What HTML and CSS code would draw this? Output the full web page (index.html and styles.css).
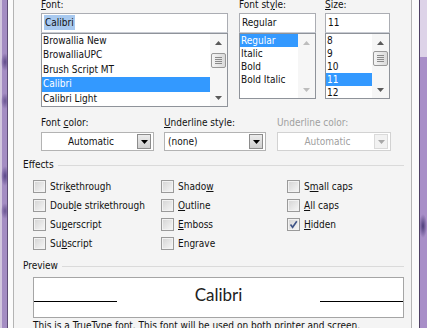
FILE: index.html
```html
<!DOCTYPE html>
<html lang="en">
<head>
    <meta charset="UTF-8">
    <meta name="viewport" content="width=device-width, initial-scale=1.0">
    <title>Font</title>
    <link rel="stylesheet" href="styles.css">
</head>
<body>
    <div class="window">
        <div class="frame frame-left"></div>
        <div class="client">
            <div class="dialog">

                <div class="pickers">
                    <div class="picker picker-font">
                        <div class="label"><u>F</u>ont:</div>
                        <div class="textbox"><span class="text-sel">Calibri</span></div>
                        <div class="listbox listbox-tall">
                            <ul class="items items-font">
                                <li>Browallia New</li>
                                <li>BrowalliaUPC</li>
                                <li>Brush Script MT</li>
                                <li class="selected">Calibri</li>
                                <li>Calibri Light</li>
                            </ul>
                            <div class="scrollbar">
                                <div class="sb-arrow"><svg width="7" height="4"><path d="M0 4L3.5 0L7 4z"/></svg></div>
                                <div class="sb-track"><div class="thumb thumb-font"><svg width="7" height="7"><path d="M0 0.5h7M0 2.5h7M0 4.5h7M0 6.5h7"/></svg></div></div>
                                <div class="sb-arrow"><svg width="7" height="4"><path d="M0 0L7 0L3.5 4z"/></svg></div>
                            </div>
                        </div>
                    </div>

                    <div class="picker picker-style">
                        <div class="label">Font st<u>y</u>le:</div>
                        <div class="textbox">Regular</div>
                        <div class="listbox">
                            <ul class="items">
                                <li class="selected">Regular</li>
                                <li>Italic</li>
                                <li>Bold</li>
                                <li>Bold Italic</li>
                            </ul>
                            <div class="scrollbar scrollbar-off">
                                <div class="sb-arrow"><svg width="7" height="4"><path d="M0 4L3.5 0L7 4z"/></svg></div>
                                <div class="sb-track"></div>
                                <div class="sb-arrow"><svg width="7" height="4"><path d="M0 0L7 0L3.5 4z"/></svg></div>
                            </div>
                        </div>
                    </div>

                    <div class="picker picker-size">
                        <div class="label"><u>S</u>ize:</div>
                        <div class="textbox">11</div>
                        <div class="listbox">
                            <ul class="items">
                                <li>8</li>
                                <li>9</li>
                                <li>10</li>
                                <li class="selected">11</li>
                                <li>12</li>
                            </ul>
                            <div class="scrollbar">
                                <div class="sb-arrow"><svg width="7" height="4"><path d="M0 4L3.5 0L7 4z"/></svg></div>
                                <div class="sb-track"><div class="thumb"><svg width="7" height="7"><path d="M0 0.5h7M0 2.5h7M0 4.5h7M0 6.5h7"/></svg></div></div>
                                <div class="sb-arrow"><svg width="7" height="4"><path d="M0 0L7 0L3.5 4z"/></svg></div>
                            </div>
                        </div>
                    </div>
                </div>

                <div class="combos">
                    <div class="combo-field combo-color">
                        <div class="label">Font <u>c</u>olor:</div>
                        <div class="combo">
                            <span class="combo-text centered">Automatic</span>
                            <span class="combo-btn"><svg width="7" height="4"><path d="M0 0L7 0L3.5 4z"/></svg></span>
                        </div>
                    </div>
                    <div class="combo-field combo-ustyle">
                        <div class="label"><u>U</u>nderline style:</div>
                        <div class="combo">
                            <span class="combo-text">(none)</span>
                            <span class="combo-btn"><svg width="7" height="4"><path d="M0 0L7 0L3.5 4z"/></svg></span>
                        </div>
                    </div>
                    <div class="combo-field combo-ucolor disabled">
                        <div class="label">Underline color:</div>
                        <div class="combo">
                            <span class="combo-text centered">Automatic</span>
                            <span class="combo-btn"><svg width="7" height="4"><path d="M0 0L7 0L3.5 4z"/></svg></span>
                        </div>
                    </div>
                </div>

                <div class="group-title group-effects">Effects</div>
                <div class="effects">
                    <div class="check-row"><span class="check"></span><span>Stri<u>k</u>ethrough</span></div>
                    <div class="check-row"><span class="check"></span><span>Doub<u>l</u>e strikethrough</span></div>
                    <div class="check-row"><span class="check"></span><span>Su<u>p</u>erscript</span></div>
                    <div class="check-row"><span class="check"></span><span>Su<u>b</u>script</span></div>
                    <div class="check-row"><span class="check"></span><span>Shado<u>w</u></span></div>
                    <div class="check-row"><span class="check"></span><span><u>O</u>utline</span></div>
                    <div class="check-row"><span class="check"></span><span><u>E</u>mboss</span></div>
                    <div class="check-row"><span class="check"></span><span>En<u>g</u>rave</span></div>
                    <div class="check-row"><span class="check"></span><span>S<u>m</u>all caps</span></div>
                    <div class="check-row"><span class="check"></span><span><u>A</u>ll caps</span></div>
                    <div class="check-row"><span class="check checked"><svg width="11" height="11"><path d="M2.5 5.5L4.6 8.3L8.8 2.2"/></svg></span><span><u>H</u>idden</span></div>
                </div>

                <div class="group-title group-preview">Preview</div>
                <div class="preview-box">
                    <div class="rule"></div>
                    <div class="sample">Calibri</div>
                    <div class="rule"></div>
                </div>
                <div class="note">This is a TrueType font. This font will be used on both printer and screen.</div>

            </div>
        </div>
        <div class="frame frame-right"></div>
    </div>
</body>
</html>
```

FILE: styles.css
```css
body {
    margin: 0;
    width: 427px;
    height: 328px;
    overflow: hidden;
    font-family: "DejaVu Sans Condensed", "DejaVu Sans", sans-serif;
    font-stretch: condensed;
    font-size: 10px;
    color: #111;
}
u {
    text-underline-offset: 1px;
}
.window {
    display: flex;
    height: 328px;
}
.frame {
    width: 7px;
    flex: none;
}
.frame-left {
    border-right: 1px solid #5e4d76;
    background:
        radial-gradient(ellipse 4px 9px at 5px 62px, #5f4a88, transparent),
        radial-gradient(ellipse 4px 8px at 5px 101px, #6a5592, transparent),
        radial-gradient(ellipse 4px 10px at 5px 176px, #594687, transparent),
        radial-gradient(ellipse 4px 8px at 5px 211px, #6a5592, transparent),
        linear-gradient(to right, #d2c7de 0 2px, #a48dc3 2px);
}
.frame-right {
    border-left: 1px solid #4f4064;
    background:
        radial-gradient(ellipse 4px 12px at 3px 226px, #4d3c7a, transparent),
        linear-gradient(to bottom, #ddd3e8 0 57px, #a88ec8 57px);
}
.client {
    flex: 1;
    display: flex;
    padding: 0 7px 0 5px;
    background: #fbfbfb;
}
.dialog {
    flex: 1;
    border-left: 1px solid #b4b4b4;
    border-right: 1px solid #b4b4b4;
    background: #f4f4f4;
    padding: 0 7px 0 9px;
}
.label {
    height: 13px;
    line-height: 13px;
    white-space: nowrap;
}

/* font / style / size pickers */
.pickers {
    display: flex;
    margin: -2px 0 0 18px;
}
.picker-font { width: 187px; }
.picker-style { width: 77px; margin-left: 11px; }
.picker-size { width: 65px; margin-left: 9px; }
.picker .label {
    margin-bottom: 2px;
}
.textbox {
    height: 18px;
    line-height: 18px;
    border: 1px solid #abadb3;
    border-bottom-color: #c9ccd3;
    background: #fff;
    padding-left: 2px;
}
.text-sel {
    background: #a8c9ef;
    padding: 2px 1px;
}
.listbox {
    display: flex;
    height: 64px;
    border: 1px solid #8f939a;
    background: #fff;
}
.listbox-tall {
    height: 72px;
}
.items {
    flex: 1;
    list-style: none;
    margin: 0;
    padding: 0 0 0 0;
    overflow: hidden;
}
.items li {
    height: 13px;
    line-height: 13px;
    padding-left: 1px;
    white-space: nowrap;
}
.items-font li {
    height: 14.4px;
    line-height: 14.4px;
}
.items li.selected {
    background: #3399ff;
    color: #fff;
}
.scrollbar {
    width: 17px;
    display: flex;
    flex-direction: column;
    background: #f6f6f6;
}
.sb-arrow {
    height: 17px;
    display: flex;
    align-items: center;
    justify-content: center;
    fill: #5a5a5a;
}
.scrollbar-off .sb-arrow {
    fill: #bdbdbd;
}
.sb-track {
    flex: 1;
}
.thumb {
    height: 13px;
    margin: 0 1px;
    border: 1px solid #989898;
    border-radius: 2px;
    background: linear-gradient(to right, #f4f4f4, #dadada);
    display: flex;
    align-items: center;
    justify-content: center;
    stroke: #8a8a8a;
    stroke-width: 1;
}
.thumb-font {
    margin-top: 2px;
}

/* colour and underline combos */
.combos {
    display: flex;
    margin: 9px 0 0 18px;
}
.combo-color { width: 113px; }
.combo-ustyle { width: 102px; margin-left: 10px; }
.combo-ucolor { width: 114px; margin-left: 11px; }
.combo-field .label {
    margin-bottom: 3px;
}
.combo {
    display: flex;
    align-items: center;
    height: 17px;
    border: 1px solid #b3b3b3;
    background: #fff;
    padding: 0 2px 0 3px;
}
.combo-text {
    flex: 1;
    white-space: nowrap;
}
.combo-text.centered {
    text-align: center;
}
.combo-btn {
    width: 12px;
    height: 13px;
    border: 1px solid #8c8c8c;
    background: linear-gradient(#ececec, #cfcfcf);
    display: flex;
    align-items: center;
    justify-content: center;
    fill: #000;
}
.disabled {
    color: #a0a0a0;
}
.disabled .combo {
    border-color: #d2d2d2;
}
.disabled .combo-btn {
    border-color: #dadada;
    background: #f2f2f2;
    fill: #a8a8a8;
}

/* group boxes */
.group-title {
    display: flex;
    align-items: center;
    height: 13px;
    line-height: 13px;
}
.group-title::after {
    content: "";
    flex: 1;
    border-top: 1px solid #dadada;
    margin: 1px 0 0 4px;
}
.group-effects {
    margin-top: 7px;
}
.effects {
    display: grid;
    grid-auto-flow: column;
    grid-template-rows: repeat(4, 19px);
    grid-template-columns: 128px 126px 1fr;
    margin: 6px 0 0 10px;
}
.check-row {
    display: flex;
    align-items: center;
    white-space: nowrap;
}
.check {
    width: 11px;
    height: 11px;
    margin-right: 4px;
    border: 1px solid #9a9a9a;
    background: linear-gradient(135deg, #d3d3d3, #f7f7f7);
    box-shadow: inset 0 0 0 1px #f2f2f2;
    display: flex;
    align-items: center;
    justify-content: center;
}
.check svg {
    fill: none;
    stroke: #3e5386;
    stroke-width: 1.6;
}
.group-preview {
    margin-top: 6px;
}
.preview-box {
    display: flex;
    height: 39px;
    margin: 5px 0 0 10px;
    border: 1px solid #a5a5a5;
    background: #fff;
}
.rule {
    width: 83px;
    height: 23px;
    border-bottom: 1px solid #000;
}
.sample {
    flex: 1;
    text-align: center;
    font-family: Lato, sans-serif;
    font-size: 17px;
    line-height: 20px;
    padding-top: 7px;
    color: #222;
}
.note {
    margin: 1px 0 0 10px;
    line-height: 13px;
    white-space: nowrap;
}
```
